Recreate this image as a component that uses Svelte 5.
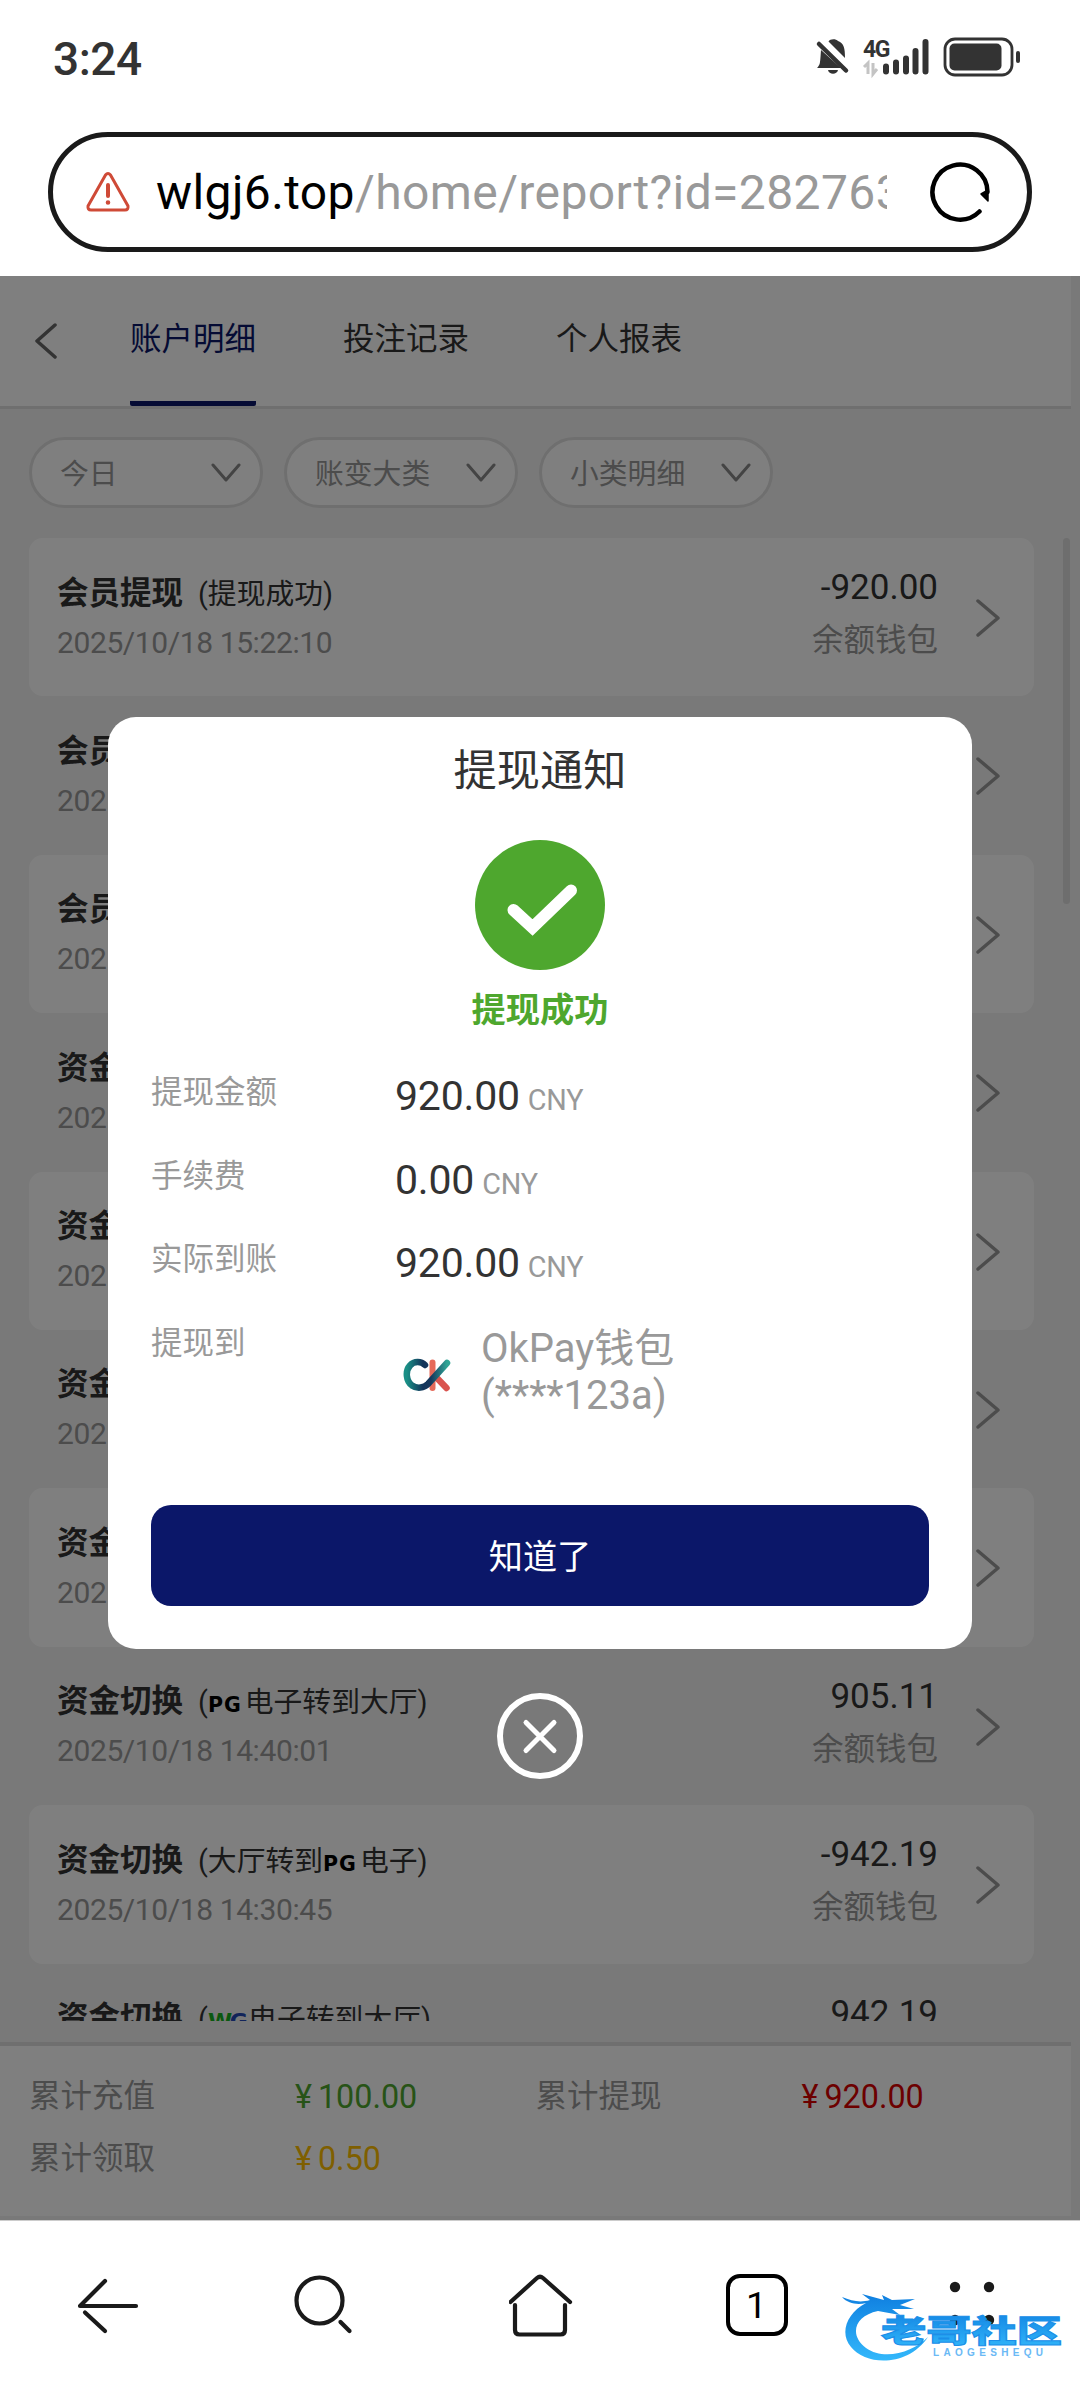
<script lang="ts">
	const tabs = ['账户明细', '投注记录', '个人报表'];
	const filters = ['今日', '账变大类', '小类明细'];

	type Part = { text: string; logo?: 'pg' | 'wg' };
	type Row = { title: string; parts: Part[]; time: string; amount: string };

	const toHall = (logo: 'pg' | 'wg'): Part[] => [
		{ text: '(' },
		{ text: logo.toUpperCase(), logo },
		{ text: '电子转到大厅)' }
	];
	const fromHall: Part[] = [{ text: '(大厅转到' }, { text: 'PG', logo: 'pg' }, { text: '电子)' }];
	const done: Part[] = [{ text: '(提现成功)' }];

	const rows: Row[] = [
		{ title: '会员提现', parts: done, time: '2025/10/18 15:22:10', amount: '-920.00' },
		{ title: '会员提现', parts: [], time: '2025', amount: '' },
		{ title: '会员提现', parts: [], time: '2025', amount: '' },
		{ title: '资金切换', parts: [], time: '2025', amount: '' },
		{ title: '资金切换', parts: [], time: '2025', amount: '' },
		{ title: '资金切换', parts: [], time: '2025', amount: '' },
		{ title: '资金切换', parts: [], time: '2025', amount: '' },
		{ title: '资金切换', parts: toHall('pg'), time: '2025/10/18 14:40:01', amount: '905.11' },
		{ title: '资金切换', parts: fromHall, time: '2025/10/18 14:30:45', amount: '-942.19' },
		{ title: '资金切换', parts: toHall('wg'), time: '', amount: '942.19' }
	];

	const totals = [
		{ label: '累计充值', value: '100.00', tone: 'green' },
		{ label: '累计提现', value: '920.00', tone: 'red' },
		{ label: '累计领取', value: '0.50', tone: 'yellow' }
	];

	const details = [
		{ label: '提现金额', value: '920.00' },
		{ label: '手续费', value: '0.00' },
		{ label: '实际到账', value: '920.00' }
	];
</script>

<div class="screen">
	<header class="status">
		<span class="clock">3:24</span>
		<svg class="status-icons" width="210" height="44" viewBox="0 0 210 44">
			<g fill="#333">
				<path d="M11 13 L31 31 H7 C10 28 10 26 10.500 20Z" />
				<path d="M18.500 4.500 C20 1.500 26 1.500 28 4 C34 6.500 35 11 35 21Z" />
				<path d="M18 33 h10 c-1 5 -9 5 -10 0Z" />
			</g>
			<path d="M9 7 L36 33.500" stroke="#333" stroke-width="4.500" stroke-linecap="round" />
			<text x="53" y="20" class="net">4G</text>
			<path d="M54 30 l4 -4 v11 M63 26 v11 l4 -5" fill="none" stroke="#c4c4c4" stroke-width="3" />
			<g stroke="#333" stroke-width="6" stroke-linecap="round">
				<path d="M76 29.500 v5 M86 25.500 v9 M96 21.500 v13 M105.500 14 v20.500 M115.500 5 v29.500" />
			</g>
			<rect x="135" y="2" width="67" height="36" rx="10" fill="none" stroke="#333" stroke-width="2.800" />
			<rect x="139.500" y="6.500" width="52" height="27" rx="5" fill="#333" />
			<path d="M208 16 v8" stroke="#333" stroke-width="4" stroke-linecap="round" />
		</svg>
	</header>

	<div class="address">
		<svg width="44" height="40" viewBox="0 0 44 40" fill="none" stroke="#cf4a37" stroke-width="3" stroke-linecap="round" stroke-linejoin="round">
			<path d="M19.500 3 Q22 0 24.500 3 L42 34 Q42.500 38 39 38 H5 Q1.500 38 2 34Z" />
			<path d="M22 13 v11" stroke-width="4" />
			<circle cx="22" cy="30.500" r="1.300" fill="#cf4a37" stroke-width="2" />
		</svg>
		<div class="url"><b>wlgj6.top</b>/home/report?id=282763</div>
		<svg width="64" height="64" viewBox="0 0 64 64" fill="none" stroke="#000" stroke-width="4.500" stroke-linecap="round">
			<path d="M51.500 51.500 A27.500 27.500 0 1 1 59.500 32" />
			<path d="M60 30 V41 L53 34Z" fill="#000" stroke-width="1.500" stroke-linejoin="round" />
		</svg>
	</div>

	<main class="page">
		<div class="page-body">
			<nav class="tabs">
				<svg width="22" height="36" viewBox="0 0 22 36" fill="none" stroke="#666" stroke-width="3.500" stroke-linecap="round" stroke-linejoin="round">
					<path d="M20 2 L2 18 L20 34" />
				</svg>
				{#each tabs as tab, i}
					<span class="tab" class:active={i === 0}>{tab}</span>
				{/each}
			</nav>

			<div class="filters">
				{#each filters as filter}
					<div class="filter">
						<span>{filter}</span>
						<svg width="30" height="20" viewBox="0 0 30 20" fill="none" stroke="#888" stroke-width="3" stroke-linecap="round" stroke-linejoin="round">
							<path d="M2 2 L15 17 L28 2" />
						</svg>
					</div>
				{/each}
			</div>

			<div class="list">
				{#each rows as row}
					<div class="row">
						<div class="info">
							<div class="title">
								<strong>{row.title}</strong>
								<span class="note">{#each row.parts as part}<span class={part.logo ?? 'plain'}>{#if part.logo === 'wg'}W<i>G</i>{:else}{part.text}{/if}</span>{/each}</span>
							</div>
							<div class="time">{row.time}</div>
						</div>
						<div class="sum">
							<div class="amount">{row.amount}</div>
							<div class="wallet">{row.amount ? '余额钱包' : ''}</div>
						</div>
						<svg width="26" height="38" viewBox="0 0 26 38" fill="none" stroke="#999" stroke-width="3.500" stroke-linecap="round" stroke-linejoin="round">
							<path d="M3 2 L23 19 L3 36" />
						</svg>
					</div>
				{/each}
			</div>

			<footer class="totals">
				{#each totals as total}
					<div class="total">
						<span>{total.label}</span>
						<span class={total.tone}><i class="yen">¥</i>{total.value}</span>
					</div>
				{/each}
			</footer>
		</div>
		<div class="scrollbar"></div>

		<div class="overlay">
			<section class="modal">
				<h2>提现通知</h2>
				<svg class="check" width="130" height="130" viewBox="0 0 130 130">
					<circle cx="65" cy="65" r="65" fill="#4ea72e" />
					<path d="M38.500 70 L57.500 87.500 L96 50.500" fill="none" stroke="#fff" stroke-width="12" stroke-linecap="round" stroke-linejoin="miter" />
				</svg>
				<p class="state">提现成功</p>
				<div class="details">
					{#each details as item}
						<div class="detail">
							<span class="label">{item.label}</span>
							<span class="value">{item.value}<small>CNY</small></span>
						</div>
					{/each}
					<div class="detail target">
						<span class="label">提现到</span>
						<svg width="48" height="34" viewBox="0 0 48 34" fill="none" stroke-width="6.500" stroke-linecap="round">
							<defs>
								<linearGradient id="okc" x1="0" y1="0" x2="1" y2="0">
									<stop offset="0" stop-color="#1a8f86" />
									<stop offset="0.400" stop-color="#12345a" />
									<stop offset="0.600" stop-color="#16375c" />
									<stop offset="1" stop-color="#2fa596" />
								</linearGradient>
							</defs>
							<path d="M29.500 4.500 V30" stroke="#e56a5a" stroke-width="6" />
							<path d="M33 19 L43.500 30" stroke="#d9544f" />
							<path d="M22 7 C18 3 11 3 7 7.500 C2 13 3 23 9 27.500 C14 31 21 30 25 26 L44 5" stroke="url(#okc)" />
						</svg>
						<span class="account">OkPay钱包<br />(****123a)</span>
					</div>
				</div>
				<button>知道了</button>
			</section>
			<svg class="close" width="86" height="86" viewBox="0 0 86 86" fill="none" stroke="#fff" stroke-width="6" stroke-linecap="round">
				<circle cx="43" cy="43" r="40" />
				<path d="M29 29.500 L57 57.500 M57 29.500 L29 57.500" stroke-width="5" />
			</svg>
		</div>
	</main>

	<nav class="toolbar">
		<svg width="64" height="64" viewBox="0 0 64 64" fill="none" stroke="#1a1a1a" stroke-width="4.200" stroke-linecap="round">
			<path d="M60 32 H4 L29 7" stroke-linejoin="round" /><path d="M9 38.500 L29 57" />
		</svg>
		<svg width="64" height="64" viewBox="0 0 64 64" fill="none" stroke="#1a1a1a" stroke-width="4.200" stroke-linecap="round">
			<circle cx="26.500" cy="26.500" r="23" /><path d="M47.500 48 L56.500 57" />
		</svg>
		<svg width="64" height="64" viewBox="0 0 64 64" fill="none" stroke="#1a1a1a" stroke-width="4.200" stroke-linecap="round" stroke-linejoin="round">
			<path d="M1.500 28 L28 4 Q31 1.500 34 4 L61 28" />
			<path d="M6 31 V56 Q6 60.500 10.500 60.500 H51.500 Q56 60.500 56 56 V31" />
		</svg>
		<span class="count"><b>1</b></span>
		<svg width="64" height="64" viewBox="0 0 64 64" fill="#1a1a1a">
			<circle cx="15" cy="13" r="5.200" /><circle cx="49" cy="13" r="5.200" />
			<circle cx="15" cy="46" r="5.200" /><circle cx="49" cy="46" r="5.200" />
		</svg>
		<svg class="watermark" width="226" height="76" viewBox="0 0 226 76">
			<defs>
				<linearGradient id="sky" x1="0" y1="0" x2="0" y2="1">
					<stop offset="0" stop-color="#0f7fe0" />
					<stop offset="1" stop-color="#33b8fb" />
				</linearGradient>
			</defs>
			<g fill="url(#sky)">
				<path d="M24 12 C5 22 -3 42 9 56 C24 75 66 76 86 46 C72 61 42 70 24 57 C7 44 12 25 36 20 L58 24 L50 18 L72 18 L58 14 L73 8 L50 9 L40 4 L42 9 L20 3 L28 9 C18 12 10 10 0 6 C6 13 16 14 24 12Z" />
			</g>
			<text transform="translate(39 51) scale(1.460 1)" class="mark-name">老哥社区</text>
			<text x="91" y="65" class="mark-sub" textLength="110">LAOGESHEQU</text>
		</svg>
	</nav>
</div>

<style>
	:global(body) {
		margin: 0;
		background: #fff;
	}

	.screen {
		display: flex;
		flex-direction: column;
		width: 1080px;
		height: 2388px;
		overflow: hidden;
		background: #fff;
		font-family: Roboto, 'Noto Sans CJK SC', sans-serif;
		color: #333;
	}

	svg {
		display: block;
		flex-shrink: 0;
	}

	i {
		font-style: normal;
	}

	.status {
		display: flex;
		justify-content: space-between;
		align-items: flex-start;
		height: 95px;
		padding: 37px 60px 0 53px;
		box-sizing: border-box;
	}

	.clock {
		font-size: 46px;
		line-height: 44px;
		font-weight: 500;
		letter-spacing: -0.5px;
	}

	.net {
		font: 700 23px Roboto, sans-serif;
		fill: #333;
		letter-spacing: -1.5px;
	}

	.address {
		display: flex;
		align-items: center;
		width: 984px;
		height: 120px;
		margin: 37px 48px 24px;
		padding: 0 35px 0 33px;
		box-sizing: border-box;
		border: 5px solid #1a1a1a;
		border-radius: 60px;
	}

	.url {
		width: 731px;
		margin: 2px auto 0 26px;
		overflow: hidden;
		white-space: nowrap;
		font-size: 48px;
		line-height: 70px;
		letter-spacing: 0.4px;
		color: #999;
	}

	.url b {
		font-weight: 400;
		color: #000;
	}

	.page {
		position: relative;
		height: 1944px;
		background: #f3f3f3;
	}

	.page-body {
		display: flex;
		flex-direction: column;
		width: 1071px;
		height: 1940px;
	}

	.tabs {
		display: flex;
		align-items: center;
		height: 130px;
		padding-left: 35px;
		background: #fff;
		border-bottom: 3px solid #dedede;
	}

	.tab {
		height: 125px;
		margin-left: 87px;
		font-size: 31.5px;
		line-height: 127px;
		border-bottom: 5px solid transparent;
		border-radius: 2px;
	}

	.tabs svg + .tab {
		margin-left: 73px;
	}

	.tab.active {
		color: #0b1769;
		border-color: #0b1769;
	}

	.filters {
		display: flex;
		gap: 21px;
		padding: 28px 29px 30px;
	}

	.filter {
		display: flex;
		align-items: center;
		justify-content: space-between;
		width: 234px;
		height: 71px;
		box-sizing: border-box;
		padding: 0 19px 0 28px;
		border: 3px solid #dedede;
		border-radius: 36px;
		background: #fff;
		font-size: 28.8px;
		color: #999;
	}

	.filter span {
		padding-bottom: 3px;
	}

	.list {
		height: 1483px;
		margin-left: 29px;
		width: 1005px;
		overflow: hidden;
	}

	.row {
		display: flex;
		height: 158.4px;
		padding: 0 33px 0 28px;
		box-sizing: border-box;
		border-radius: 14px;
	}

	.row:nth-child(odd) {
		background: #fff;
	}

	.row > svg {
		margin: 61px 0 0 37px;
	}

	.info {
		flex: 1;
		padding-top: 33.5px;
	}

	.title {
		display: flex;
		height: 44px;
		font-size: 31.5px;
		line-height: 44px;
		white-space: nowrap;
	}

	.note {
		margin-left: 15px;
		font-size: 28.8px;
	}

	.pg,
	.wg {
		margin: 0 3px 0 0;
		font: 700 20.5px 'DejaVu Sans', sans-serif;
		letter-spacing: 1px;
		color: #000;
	}

	.wg {
		color: #17b01f;
		letter-spacing: -2.5px;
		font-size: 22px;
	}

	.wg i {
		color: #2448b4;
	}

	.time {
		margin-top: 5px;
		font-size: 30px;
		line-height: 44px;
		color: #999;
		letter-spacing: -0.4px;
	}

	.sum {
		padding-top: 28px;
		text-align: right;
	}

	.amount {
		height: 44px;
		font-size: 35px;
		line-height: 44px;
	}

	.wallet {
		margin-top: 9px;
		font-size: 31.5px;
		line-height: 44px;
		color: #999;
	}

	.totals {
		display: flex;
		flex-wrap: wrap;
		align-content: flex-start;
		flex: 1;
		margin-top: 21px;
		padding: 20px 0 0 29px;
		border-top: 4px solid #dedede;
		background: #fff;
	}

	.total {
		display: flex;
		width: 506.5px;
		font-size: 32.3px;
		line-height: 62px;
	}

	.total span:first-child {
		width: 266px;
		font-size: 31.5px;
		color: #999;
	}

	.yen {
		margin-right: 6px;
	}

	.green {
		color: #4ea72e;
	}

	.red {
		color: #d80000;
	}

	.yellow {
		color: #ffbe00;
	}

	.scrollbar {
		position: absolute;
		top: 262px;
		right: 10px;
		width: 7px;
		height: 366px;
		border-radius: 4px;
		background: #dcdcdc;
	}

	.overlay {
		position: absolute;
		inset: 0;
		display: flex;
		flex-direction: column;
		align-items: center;
		padding-top: 441px;
		background: rgba(0, 0, 0, 0.5);
	}

	.modal {
		display: flex;
		flex-direction: column;
		align-items: center;
		width: 864px;
		height: 932px;
		box-sizing: border-box;
		padding: 0 43px;
		border-radius: 28px;
		background: #fff;
	}

	h2 {
		margin: 24px 0 0;
		font-size: 43.2px;
		line-height: 62px;
		font-weight: 400;
	}

	.check {
		margin-top: 37px;
	}

	.state {
		margin: 17px 0 0;
		font-size: 34.2px;
		line-height: 46px;
		font-weight: 700;
		color: #4ea72e;
	}

	.details {
		width: 100%;
		margin-top: 29px;
		height: 443px;
	}

	.detail {
		display: flex;
		height: 83.500px;
		font-size: 31.5px;
		line-height: 62px;
		color: #999;
	}

	.label {
		width: 244px;
	}

	.value {
		padding-top: 3px;
		font-size: 41px;
		line-height: 62px;
		letter-spacing: -0.2px;
		color: #333;
	}

	small {
		margin-left: 8px;
		font-size: 28.8px;
		color: #999;
	}

	.target svg {
		margin: 45px 30px 0 8px;
	}

	.account {
		padding-top: 12px;
		font-size: 40px;
		line-height: 47px;
	}

	button {
		width: 778px;
		height: 101px;
		border: 0;
		border-radius: 20px;
		padding: 0 0 4px;
		background: #0b1769;
		font: 400 34.2px Roboto, 'Noto Sans CJK SC', sans-serif;
		color: #fff;
	}

	.close {
		margin-top: 44px;
	}

	.toolbar {
		position: relative;
		display: flex;
		flex: 1;
		align-items: flex-start;
		justify-content: space-between;
		padding: 53px 76px 0;
		border-top: 1px solid #ccc;
	}

	.count {
		display: flex;
		align-items: center;
		justify-content: center;
		width: 62px;
		height: 62px;
		box-sizing: border-box;
		border: 4.500px solid #000;
		border-radius: 14px;
		font-size: 37px;
		color: #000;
	}

	.count b {
		font-weight: 400;
	}

	.watermark {
		position: absolute;
		left: 842px;
		top: 70px;
	}

	.mark-name {
		font: 900 31px 'Noto Sans CJK SC', sans-serif;
		fill: url(#sky);
		stroke: #1b8fe8;
		stroke-width: 1;
	}

	.mark-sub {
		font: 700 10px 'Liberation Sans', sans-serif;
		fill: #6bb9f5;
	}
</style>
